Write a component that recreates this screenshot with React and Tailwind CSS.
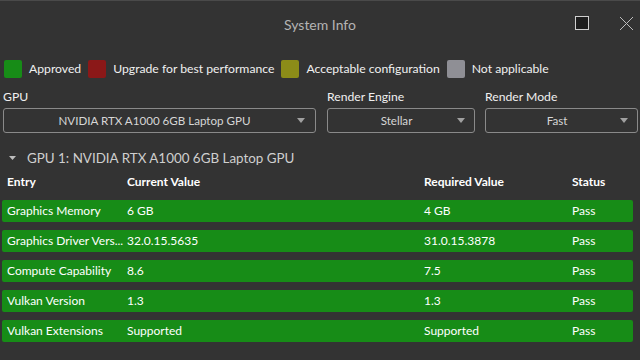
import React from "react";

const rows = [
  ["Graphics Memory", "6 GB", "4 GB", "Pass"],
  ["Graphics Driver Vers...", "32.0.15.5635", "31.0.15.3878", "Pass"],
  ["Compute Capability", "8.6", "7.5", "Pass"],
  ["Vulkan Version", "1.3", "1.3", "Pass"],
  ["Vulkan Extensions", "Supported", "Supported", "Pass"],
];

function Arrow() {
  return (
    <svg width="8" height="5" viewBox="0 0 8 5" className="shrink-0">
      <path d="M0 0 L8 0 L4 5 Z" fill="#a0a0a0" />
    </svg>
  );
}

function Select({ value, className }) {
  return (
    <div
      className={
        "h-[25px] flex items-center border border-[#8a8a8a] rounded-[3px] pl-2 pr-[9px] text-[11.6px] text-[#d6d6d6] " +
        className
      }
    >
      <span className="flex-1 text-center">{value}</span>
      <Arrow />
    </div>
  );
}

function Legend({ color, label }) {
  return (
    <div className="flex items-center gap-[7px]">
      <div className={"w-[18px] h-[18px] rounded-[2px] " + color} />
      <span>{label}</span>
    </div>
  );
}

export default function App() {
  return (
    <div
      className="w-[640px] h-[360px] bg-[#333333] border-t border-[#4a4a4a] overflow-hidden text-[12.2px] text-white"
      style={{ fontFamily: "Lato, 'Noto Sans', sans-serif" }}
    >
      <div className="relative h-[47px] flex items-center justify-center">
        <span className="text-[14px] text-[#b4b4b4]">System Info</span>
        <div className="absolute right-[51px] top-[15px] w-[14px] h-[14px] border border-[#cfcfcf] bg-[#1e1e1e]" />
        <svg className="absolute right-[6px] top-[15px]" width="15" height="15" viewBox="0 0 15 15">
          <path d="M1 1 L14 14 M14 1 L1 14" stroke="#bdbdbd" strokeWidth="1" />
        </svg>
      </div>
      <div className="flex items-center gap-[7px] pl-[4px] h-[40px] pt-[2px] text-[#f0f0f0]">
        <Legend color="bg-[#178c17]" label="Approved" />
        <Legend color="bg-[#8b1818]" label="Upgrade for best performance" />
        <Legend color="bg-[#8c8c18]" label="Acceptable configuration" />
        <Legend color="bg-[#8f8f95]" label="Not applicable" />
      </div>
      <div className="flex gap-[10px] pl-[3px] pr-[2px] -mt-[1px]">
        <div className="w-[313px] flex flex-col gap-[2px]">
          <span className="text-[#f0f0f0] leading-[19px]">GPU</span>
          <Select value="NVIDIA RTX A1000 6GB Laptop GPU" className="pr-[10px]" />
        </div>
        <div className="w-[148px] flex flex-col gap-[2px] ml-[1px]">
          <span className="text-[#f0f0f0] leading-[19px]">Render Engine</span>
          <Select value="Stellar" />
        </div>
        <div className="flex-1 flex flex-col gap-[2px]">
          <span className="text-[#f0f0f0] leading-[19px]">Render Mode</span>
          <Select value="Fast" />
        </div>
      </div>
      <div className="flex items-center h-[26px] mt-[12px] pl-[9px] gap-[11px] text-[13.4px] text-[#cfcfcf]">
        <svg width="7" height="4" viewBox="0 0 7 4">
          <path d="M0 0 L7 0 L3.5 4 Z" fill="#bdbdbd" />
        </svg>
        <span>GPU 1: NVIDIA RTX A1000 6GB Laptop GPU</span>
      </div>
      <div className="flex items-center h-[22px] px-[7px] text-[12px] font-bold">
        <span className="w-[120px]">Entry</span>
        <span className="w-[297px]">Current Value</span>
        <span className="w-[148px]">Required Value</span>
        <span>Status</span>
      </div>
      <div className="flex flex-col gap-[8px] mt-[7px] pl-[2px] w-[633px]">
        {rows.map((r) => (
          <div
            key={r[0]}
            className="h-[22px] bg-[#178c17] rounded-[2px] flex items-center px-[5px] text-[12px]"
          >
            <span className="w-[120px] whitespace-nowrap">{r[0]}</span>
            <span className="w-[297px]">{r[1]}</span>
            <span className="w-[148px]">{r[2]}</span>
            <span>{r[3]}</span>
          </div>
        ))}
      </div>
    </div>
  );
}
